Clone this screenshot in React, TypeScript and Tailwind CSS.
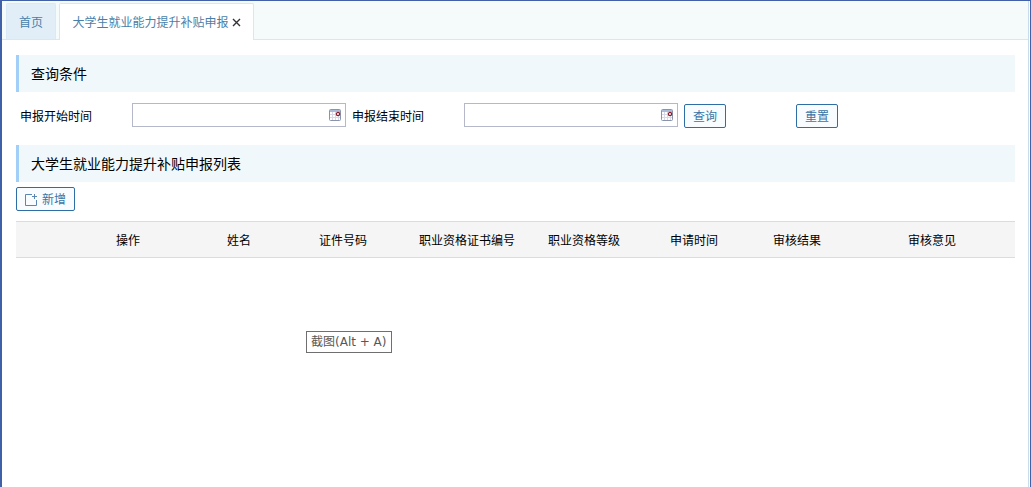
import { useState } from 'react'

const COLUMNS = [
  { title: '', width: 'w-[39px]' },
  { title: '操作', width: 'w-[146px]' },
  { title: '姓名', width: 'w-[76px]' },
  { title: '证件号码', width: 'w-[132px]' },
  { title: '职业资格证书编号', width: 'w-[116px]' },
  { title: '职业资格等级', width: 'w-[118px]' },
  { title: '申请时间', width: 'w-[102px]' },
  { title: '审核结果', width: 'w-[104px]' },
  { title: '审核意见', width: 'w-[166px]' },
]

function CalendarIcon() {
  return (
    <svg width="12" height="12" viewBox="0 0 12 12">
      <rect x="0.5" y="0.5" width="11" height="11" rx="1" fill="#fff" stroke="#8993ad" />
      <rect x="1" y="1" width="10" height="2" fill="#a9bcd8" />
      <path d="M1 5.5H11M1 8.5H11M3.5 3V11M6.5 3V11M9.5 3V11" stroke="#d5dae6" />
      <circle cx="9" cy="5" r="1.6" fill="#fff" stroke="#8c1d2c" strokeWidth="1.3" />
    </svg>
  )
}

function AddIcon() {
  return (
    <svg width="13" height="13" viewBox="0 0 13 13" fill="none" stroke="#5b86b4">
      <path d="M7 1.5H0.5V12.5H11.5V7" />
      <path d="M9.5 1V6M7 3.5H12" />
    </svg>
  )
}

function SectionTitle({ children }: { children: string }) {
  return (
    <h2 className="h-[37px] border-l-3 border-[#a1cff7] bg-[#f0f8fc] pl-3 text-sm leading-[37px] text-black">
      {children}
    </h2>
  )
}

interface DateFieldProps {
  id: string
  label: string
  value: string
  onChange: (value: string) => void
}

function DateField({ id, label, value, onChange }: DateFieldProps) {
  return (
    <div className="flex items-center pr-0.5">
      <label htmlFor={id} className="w-[116px] shrink-0 pt-0.5 pl-1">
        {label}
      </label>
      <div className="flex h-6 min-w-0 flex-1 items-center border border-[#b5b8c8] bg-white pr-1">
        <input
          id={id}
          type="text"
          value={value}
          onChange={(e) => onChange(e.target.value)}
          className="h-full min-w-0 flex-1 px-1 outline-none"
        />
        <button type="button" aria-label={`选择${label}`} className="cursor-pointer">
          <CalendarIcon />
        </button>
      </div>
    </div>
  )
}

function ActionButton({ children, onClick }: { children: string; onClick?: () => void }) {
  return (
    <button
      type="button"
      onClick={onClick}
      className="h-6 cursor-pointer rounded-xs border border-[#2f6ea5] bg-[#f8fcff] px-2 text-[#3a74a6]"
    >
      {children}
    </button>
  )
}

export default function App() {
  const [start, setStart] = useState('')
  const [end, setEnd] = useState('')

  const handleReset = () => {
    setStart('')
    setEnd('')
  }

  return (
    <div className="flex min-h-screen border-t border-r border-l-2 border-[#4061a8] bg-white font-['Noto_Sans_CJK_SC',sans-serif] text-xs text-black">
      <div className="mr-px min-w-0 flex-1 border-r border-[#c9dcec]">
        <nav className="flex h-[39px] gap-[3px] border-b border-[#d6e8f3] bg-[#f5fafb] pt-0.5 pl-1">
          <a
            href="#home"
            className="flex w-[50px] items-center justify-center rounded-t-xs border border-b-0 border-[#d9e9f5] bg-[#e1eef8] text-[#4a7fa8]"
          >
            首页
          </a>
          <div className="-mb-px flex w-[195px] items-center justify-center gap-[3px] rounded-t-xs border border-b-0 border-[#d6e8f3] bg-white">
            <a href="#apply" className="text-[#4a7fa8]">
              大学生就业能力提升补贴申报
            </a>
            <button type="button" aria-label="关闭" className="cursor-pointer">
              <svg width="9" height="9" viewBox="0 0 9 9" stroke="#333" strokeWidth="1.4">
                <path d="M1 1L8 8M8 1L1 8" />
              </svg>
            </button>
          </div>
        </nav>

        <main className="pt-[15px] pr-[13px] pl-[14px]">
          <SectionTitle>查询条件</SectionTitle>

          <form className="grid grid-cols-[332fr_332fr_335fr] items-start pt-[11px] pb-[17px]">
            <DateField id="start" label="申报开始时间" value={start} onChange={setStart} />
            <DateField id="end" label="申报结束时间" value={end} onChange={setEnd} />
            <div className="flex items-center pt-px pl-1">
              <div className="w-28">
                <ActionButton>查询</ActionButton>
              </div>
              <ActionButton onClick={handleReset}>重置</ActionButton>
            </div>
          </form>

          <SectionTitle>大学生就业能力提升补贴申报列表</SectionTitle>

          <button
            type="button"
            className="mt-[5px] flex h-6 cursor-pointer items-center gap-1 rounded-xs border border-[#2f6ea5] bg-[#f8fcff] pr-2 pl-2 text-[#3a74a6]"
          >
            <AddIcon />
            新增
          </button>

          <table className="mt-2.5 w-full table-fixed">
            <thead>
              <tr className="h-9 border-y border-[#dcdcdc] bg-[#f5f5f5]">
                {COLUMNS.map((col) => (
                  <th key={col.title} className={`${col.width} p-0 text-center font-normal whitespace-nowrap`}>
                    {col.title}
                  </th>
                ))}
              </tr>
            </thead>
            <tbody />
          </table>
        </main>
      </div>

      {/* Shortcut hint */}
      <div
        role="tooltip"
        className="absolute top-[331px] left-[306px] border border-[#6f6f6f] bg-white px-1 py-0.5 font-['DejaVu_Sans','Noto_Sans_CJK_SC',sans-serif] leading-4 whitespace-nowrap text-[#575757]"
      >
        截图(Alt + A)
      </div>
    </div>
  )
}
